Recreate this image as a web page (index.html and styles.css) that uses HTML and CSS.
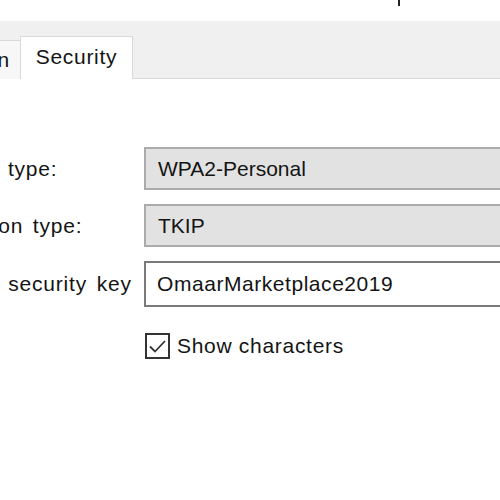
FILE: index.html
```html
<!DOCTYPE html>
<html>
<head>
<meta charset="utf-8">
<link rel="stylesheet" href="styles.css">
</head>
<body>
<div class="titlebar"><span class="title-mark"></span></div>
<div class="tabstrip">
  <div class="tab tab-prev"><span class="tab-label">Connection</span></div>
  <div class="tab tab-active"><span class="tab-label">Security</span></div>
</div>
<div class="content">
  <div class="form">
    <div class="label">Security type:</div>
    <div class="field field-disabled">WPA2-Personal</div>
    <div class="label">Encryption type:</div>
    <div class="field field-disabled">TKIP</div>
    <div class="label">Network security key</div>
    <div class="field field-input">OmaarMarketplace2019</div>
    <label class="check-row">
      <span class="checkbox">
        <svg width="19" height="16" viewBox="0 0 19 16"><path d="M2 8.5 L7 13.5 L17 3" fill="none" stroke="#333333" stroke-width="1.8"/></svg>
      </span>
      <span class="check-text">Show characters</span>
    </label>
  </div>
</div>
</body>
</html>
```
FILE: styles.css
```css
html, body {
  margin: 0;
  padding: 0;
}
body {
  width: 500px;
  height: 500px;
  overflow: hidden;
  background: #ffffff;
  font-family: "Liberation Sans", Arial, sans-serif;
  font-size: 21px;
  color: #141414;
}
.titlebar {
  height: 21px;
  position: relative;
  background: #ffffff;
}
.title-mark {
  position: absolute;
  left: 398px;
  top: 0;
  width: 2px;
  height: 6px;
  background: #222;
}
.tabstrip {
  height: 57px;
  background: #f0f0f0;
  border-bottom: 1px solid #d9d9d9;
  display: flex;
  align-items: flex-end;
  margin-left: -92px;
}
.tab {
  box-sizing: border-box;
  border: 1px solid #d9d9d9;
  border-bottom: none;
  display: flex;
  align-items: center;
  margin-bottom: -1px;
}
.tab-prev {
  width: 112px;
  height: 39px;
  background: #f7f7f7;
  border-right: none;
  justify-content: flex-end;
  padding-right: 10px;
}
.tab-active {
  width: 113px;
  height: 43px;
  background: #ffffff;
  padding-bottom: 2px;
  justify-content: center;
}
.tab-label {
  font-size: 21px;
  letter-spacing: 0.7px;
}
.content {
  padding-top: 68px;
}
.form {
  margin-left: -84px;
  display: grid;
  grid-template-columns: 228px 460px;
  row-gap: 14px;
  align-items: center;
}
.label {
  white-space: nowrap;
  letter-spacing: 0.8px;
  word-spacing: 3px;
}
.field {
  box-sizing: border-box;
  height: 43px;
  padding-left: 12px;
  display: flex;
  align-items: center;
  white-space: nowrap;
}
.field-disabled {
  background: #e2e2e2;
  border: 2px solid #ababab;
}
.field-input {
  height: 46px;
  background: #ffffff;
  border: 2px solid #7a7a7a;
  padding-left: 11px;
  letter-spacing: 0.55px;
}
.check-row {
  grid-column: 2;
  display: flex;
  align-items: center;
  gap: 7px;
  margin-left: 1px;
  margin-top: 12px;
}
.checkbox {
  box-sizing: border-box;
  width: 25px;
  height: 26px;
  border: 2px solid #333333;
  background: #fff;
  display: flex;
  align-items: center;
  justify-content: center;
}
.check-text {
  white-space: nowrap;
  letter-spacing: 0.7px;
}
```
